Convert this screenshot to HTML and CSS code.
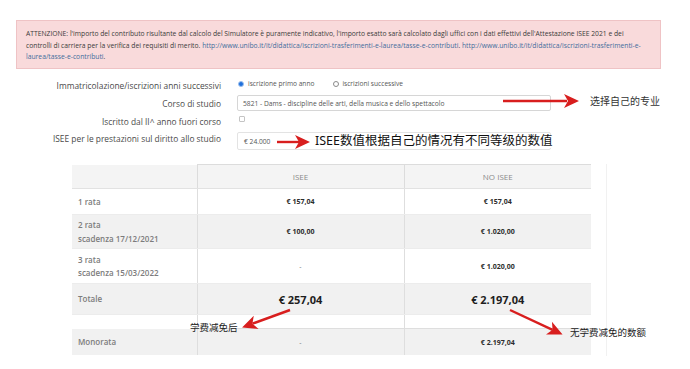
FILE: index.html
```html
<!DOCTYPE html>
<html lang="it">
	<head>
		<meta charset="utf-8">
		<title>Simulatore contributi</title>
		<link rel="stylesheet" href="styles.css">
	</head>
	<body>
		<div class="sheet">
			<div class="alert">
				ATTENZIONE: l'importo del contributo risultante dal calcolo del Simulatore è puramente indicativo, l'importo esatto sarà calcolato dagli uffici con i dati effettivi dell'Attestazione ISEE 2021 e dei<br>
				controlli di carriera per la verifica dei requisiti di merito. <a href="#">http://www.unibo.it/it/didattica/iscrizioni-trasferimenti-e-laurea/tasse-e-contributi</a>. <a href="#">http://www.unibo.it/it/didattica/iscrizioni-trasferimenti-e-<br>laurea/tasse-e-contributi</a>.
			</div>

			<div class="form">
				<div class="row row-1">
					<div class="lbl">Immatricolazione/iscrizioni anni successivi</div>
					<div class="ctl radios">
						<span class="radio on"></span><span class="opt">iscrizione primo anno</span>
						<span class="radio"></span><span class="opt">iscrizioni successive</span>
					</div>
				</div>
				<div class="row row-2">
					<div class="lbl">Corso di studio</div>
					<div class="ctl field">5821 - Dams - discipline delle arti, della musica e dello spettacolo</div>
				</div>
				<div class="row row-3">
					<div class="lbl">Iscritto dal II^ anno fuori corso</div>
					<div class="ctl"><span class="check"></span></div>
				</div>
				<div class="row row-4">
					<div class="lbl">ISEE per le prestazioni sul diritto allo studio</div>
					<div class="ctl field field-isee">€ 24.000</div>
				</div>
			</div>

			<div class="table-wrap">
				<table class="fees">
					<colgroup>
						<col class="c-label">
						<col class="c-isee">
						<col class="c-noisee">
					</colgroup>
					<tr class="head">
						<th></th>
						<th>ISEE</th>
						<th>NO ISEE</th>
					</tr>
					<tr class="r-1">
						<td class="name">1 rata</td>
						<td>€ 157,04</td>
						<td>€ 157,04</td>
					</tr>
					<tr class="r-2 shaded">
						<td class="name">2 rata<br>scadenza 17/12/2021</td>
						<td>€ 100,00</td>
						<td>€ 1.020,00</td>
					</tr>
					<tr class="r-3">
						<td class="name">3 rata<br>scadenza 15/03/2022</td>
						<td class="dash">-</td>
						<td>€ 1.020,00</td>
					</tr>
					<tr class="r-tot shaded">
						<td class="name">Totale</td>
						<td class="big">€ 257,04</td>
						<td class="big">€ 2.197,04</td>
					</tr>
					<tr class="r-gap">
						<td></td>
						<td></td>
						<td></td>
					</tr>
					<tr class="r-mono shaded">
						<td class="name">Monorata</td>
						<td class="dash">-</td>
						<td>€ 2.197,04</td>
					</tr>
				</table>
			</div>

			<!-- red hand-drawn notes over the form -->
			<svg class="arrows" width="690" height="369" viewBox="0 0 690 369">
				<defs>
					<g id="arrow-head">
						<polygon points="0,0 -15,-7 -11,0 -15,7" fill="#d81e1e"/>
					</g>
				</defs>
				<g transform="translate(503,101)">
					<line x1="0" y1="0" x2="64" y2="0" stroke="#d81e1e" stroke-width="2.4"/>
					<use href="#arrow-head" x="76" y="0"/>
				</g>
				<g transform="translate(277,142)">
					<line x1="0" y1="0" x2="22" y2="0" stroke="#d81e1e" stroke-width="2.4"/>
					<use href="#arrow-head" x="33" y="0"/>
				</g>
				<g transform="translate(290,310) rotate(160)">
					<line x1="0" y1="0" x2="40" y2="0" stroke="#d81e1e" stroke-width="2.4"/>
					<use href="#arrow-head" x="51" y="0"/>
				</g>
				<g transform="translate(510,310) rotate(25)">
					<line x1="0" y1="0" x2="47" y2="0" stroke="#d81e1e" stroke-width="2.4"/>
					<use href="#arrow-head" x="58" y="0"/>
				</g>
			</svg>
			<span class="note note-course">选择自己的专业</span>
			<span class="note note-isee">ISEE数值根据自己的情况有不同等级的数值</span>
			<span class="note note-after">学费减免后</span>
			<span class="note note-full">无学费减免的数额</span>
		</div>
	</body>
</html>
```

FILE: styles.css
```css
body {
	margin: 0;
	background: #fff;
	font-family: 'Open Sans', 'Noto Sans', sans-serif;
	color: #444;
}

.sheet {
	position: relative;
	width: 690px;
	height: 369px;
	overflow: hidden;
}

.alert {
	box-sizing: border-box;
	width: 645px;
	height: 49px;
	margin: 20px 0 0 16px;
	padding: 7px 9px;
	background: #f9dadb;
	border: 1px solid #efc3c5;
	font-size: 6.75px;
	line-height: 11.5px;
	color: #3a3a3a;
	white-space: nowrap;
}
.alert a {
	color: #3f6d9c;
	text-decoration: none;
}

.form {
	margin-top: 7px;
}
.row {
	display: flex;
	align-items: center;
}
.row-1 { height: 15px; }
.row-2 { height: 16px; margin-top: 4px; }
.row-3 { height: 12px; margin-top: 2px; }
.row-4 { height: 18px; margin-top: 7px; }

.lbl {
	width: 221px;
	margin-right: 16px;
	text-align: right;
	font-size: 8.4px;
	color: #4a4a4a;
	white-space: nowrap;
}
.row-1 .lbl { margin-top: 3px; }
.row-3 .lbl { margin-top: 4px; }
.row-4 .lbl { margin-top: -5px; }

.radios {
	display: flex;
	align-items: center;
	font-size: 6.6px;
	color: #555;
}
.radio {
	box-sizing: border-box;
	width: 6px;
	height: 6px;
	margin-left: 1px;
	border: 1px solid #8a8a8a;
	border-radius: 50%;
	background: #fff;
}
.radio.on {
	border: 1px solid #9cc0ee;
	background: #1f6fdb;
}
.opt {
	margin: 0 11px 0 4px;
}
.opt:last-child { margin-left: 3px; }
.radio + .opt + .radio { margin-left: 8px; }

.field {
	box-sizing: border-box;
	width: 314px;
	height: 16px;
	display: flex;
	align-items: center;
	padding-left: 5px;
	border: 1px solid #d6d6d6;
	border-radius: 2px;
	font-size: 6.7px;
	color: #555;
}
.field-isee {
	height: 18px;
	padding-left: 6px;
	border-color: #e3e3e3;
}

.check {
	display: block;
	box-sizing: border-box;
	width: 6px;
	height: 6px;
	margin: 0 0 1px 2px;
	border: 1px solid #c4c4c4;
	border-radius: 1px;
}

.table-wrap {
	width: 534px;
	height: 192px;
	margin: 14px 0 0 72px;
	border-right: 1px solid #f1f1f1;
}
.fees {
	width: 519px;
	border-collapse: collapse;
	table-layout: fixed;
	font-size: 7px;
}
.c-label { width: 125px; }
.c-isee { width: 207px; }
.c-noisee { width: 187px; }

.fees th {
	height: 23px;
	padding: 0;
	background: #f4f4f4;
	color: #8a8a8a;
	font-size: 8px;
	font-weight: 400;
	border-bottom: 1px solid #e2e2e2;
}
.fees th + th {
	border-left: 1px solid #dcdcdc;
	border-top: 1px solid #dcdcdc;
}
.fees td {
	padding: 0;
	text-align: center;
	font-weight: 700;
	color: #2c2c2c;
	border-bottom: 1px solid #ececec;
}
.fees td + td {
	border-left: 1px solid #dedede;
}
.fees td.name {
	padding-left: 6px;
	text-align: left;
	font-size: 8px;
	font-weight: 600;
	color: #7c7c7c;
	line-height: 13.5px;
}
.fees td.dash {
	font-weight: 400;
	color: #777;
}
.fees td.big {
	font-size: 11px;
	color: #1e1e1e;
}

.shaded td { background: #f1f1f1; }
.r-1 td { height: 25px; }
.r-2 td { height: 33px; }
.r-3 td { height: 34px; }
.r-tot td { height: 30px; }
.r-gap td {
	height: 13px;
	border-bottom: 1px solid #dedede;
}
.r-gap td:first-child { border-bottom-color: #fff; }
.r-mono td { height: 26px; border-bottom: none; }

.arrows {
	position: absolute;
	left: 0;
	top: 0;
	pointer-events: none;
}

.note {
	position: absolute;
	font-family: 'Noto Sans', 'Noto Sans CJK SC', sans-serif;
	color: #222;
	white-space: nowrap;
	line-height: 1;
}
.note-course {
	left: 590px;
	top: 96px;
	font-size: 10px;
	color: #333;
}
.note-isee {
	left: 315px;
	top: 135px;
	font-size: 12.5px;
	color: #111;
	background: #fff;
}
.note-after {
	left: 190px;
	top: 323px;
	font-size: 9.5px;
}
.note-full {
	left: 570px;
	top: 328px;
	font-size: 9.5px;
}
```
